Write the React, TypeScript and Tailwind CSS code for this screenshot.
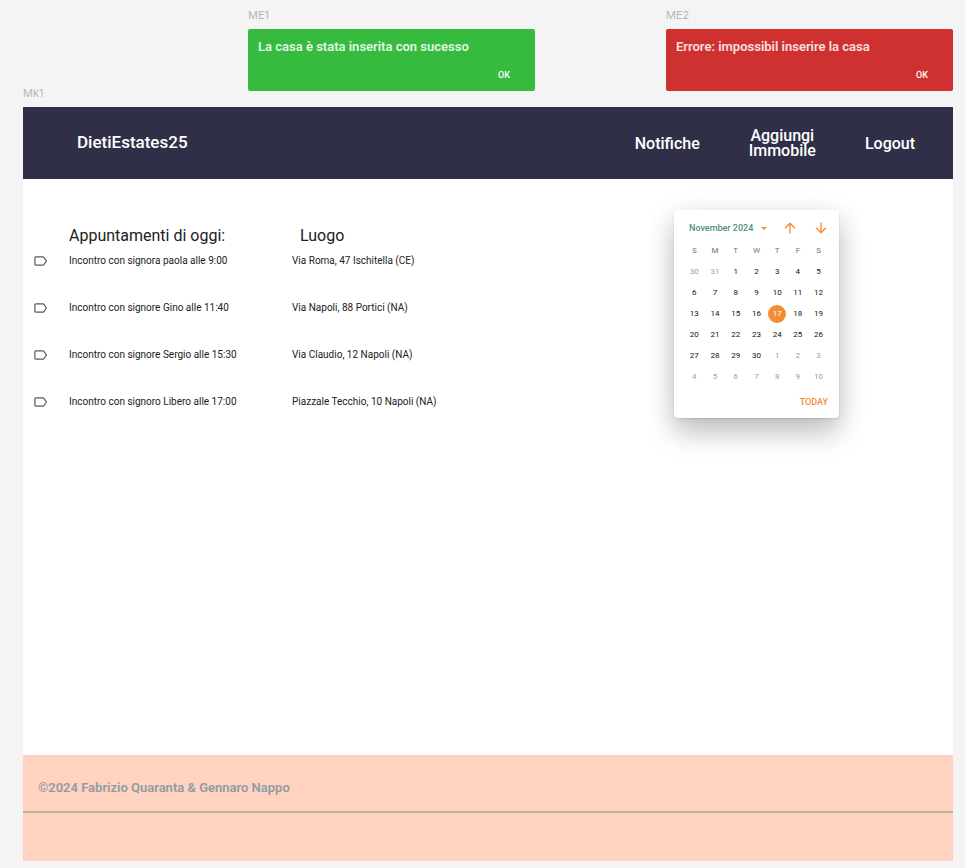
import React from "react";

const appointments = [
  { what: "Incontro con signora paola alle 9:00", where: "Via Roma, 47 Ischitella (CE)" },
  { what: "Incontro con signore Gino alle 11:40", where: "Via Napoli, 88 Portici (NA)" },
  { what: "Incontro con signore Sergio alle 15:30", where: "Via Claudio, 12 Napoli (NA)" },
  { what: "Incontro con signoro Libero alle 17:00", where: "Piazzale Tecchio, 10 Napoli (NA)" },
];

const weekdays = ["S", "M", "T", "W", "T", "F", "S"];

const weeks = [
  [30, 31, 1, 2, 3, 4, 5],
  [6, 7, 8, 9, 10, 11, 12],
  [13, 14, 15, 16, 17, 18, 19],
  [20, 21, 22, 23, 24, 25, 26],
  [27, 28, 29, 30, 1, 2, 3],
  [4, 5, 6, 7, 8, 9, 10],
];

function FrameLabel({ children }: { children: React.ReactNode }) {
  return <div className="font-['Inter',sans-serif] text-[11px] leading-[14px] text-[#b8b8b8]">{children}</div>;
}

function Notice({ label, message, tone }: { label: string; message: string; tone: "success" | "error" }) {
  const background = tone === "success" ? "bg-[#36bb3e]" : "bg-[#cf3130]";
  return (
    <section className="mb-[9px] flex flex-col gap-[7px]">
      <FrameLabel>{label}</FrameLabel>
      <div role="status" className={`flex flex-col rounded-[2px] px-[10px] pt-[10px] pb-2 ${background}`}>
        <p className="text-[13px] leading-4 font-semibold text-white/85">{message}</p>
        <button type="button" className="mt-[13px] mr-[15px] self-end text-[9px] leading-[15px] font-medium text-white">
          OK
        </button>
      </div>
    </section>
  );
}

function TagIcon() {
  return (
    <svg viewBox="0 0 14 10" className="mt-[3px] block h-[10px] w-[14px]" fill="none" stroke="#5a5a5a" strokeWidth="1.2" aria-hidden="true">
      <path d="M2 .8h6.8c.5 0 .8.2 1.1.6L12.4 5 9.9 8.6c-.3.4-.6.6-1.1.6H2c-.7 0-1.1-.4-1.1-1V1.8c0-.6.4-1 1.1-1Z" />
    </svg>
  );
}

function ArrowIcon({ down = false }: { down?: boolean }) {
  return (
    <svg viewBox="0 0 12 12" className={`block size-3 ${down ? "rotate-180" : ""}`} fill="none" stroke="#f28d35" strokeWidth="1.3" aria-hidden="true">
      <path d="M6 11.4V1.2M1 6.2l5-5 5 5" />
    </svg>
  );
}

function Calendar() {
  return (
    <section
      aria-label="Calendario"
      className="w-[165px] rounded-[4px] bg-white px-[10px] pt-[9px] pb-[9px] shadow-[0_1px_2px_rgba(0,0,0,0.12),0_16px_28px_rgba(0,0,0,0.2),0_4px_28px_rgba(0,0,0,0.1)]"
    >
      <div className="flex h-[18px] items-center pl-[5px]">
        <div className="flex items-center gap-[7px]">
          <select
            aria-label="Mese"
            className="h-[14px] appearance-none bg-transparent text-[9px] leading-[14px] font-medium text-[#4f8f85]"
            defaultValue="11"
          >
            <option value="11">November 2024</option>
          </select>
          <svg viewBox="0 0 6 3" className="h-[3px] w-[6px]" fill="#f28d35" aria-hidden="true">
            <path d="M0 0h6L3 3Z" />
          </svg>
        </div>
        <div className="ml-auto flex gap-[19px] pr-[2px]">
          <button type="button" aria-label="Mese precedente"><ArrowIcon /></button>
          <button type="button" aria-label="Mese successivo"><ArrowIcon down /></button>
        </div>
      </div>
      <table className="mt-[3px] w-full table-fixed border-collapse text-center text-[8px] leading-[10px]">
        <thead>
          <tr className="h-[21px]">
            {weekdays.map((day, i) => (
              <th key={i} scope="col" className="p-0 font-normal text-[#757575]">{day}</th>
            ))}
          </tr>
        </thead>
        <tbody>
          {weeks.map((week, w) => (
            <tr key={w} className="h-[21px]">
              {week.map((day, d) => {
                const outside = (w === 0 && day > 20) || (w > 3 && day < 20);
                const selected = day === 17;
                const look = selected
                  ? "bg-[#f28d35] text-white"
                  : outside
                    ? "text-[#9e9e9e]"
                    : "text-[#111111]";
                return (
                  <td key={d} className="p-0">
                    <button type="button" className={`mx-auto flex size-[18px] items-center justify-center rounded-full ${look}`}>
                      {day}
                    </button>
                  </td>
                );
              })}
            </tr>
          ))}
        </tbody>
      </table>
      <div className="mt-[9px] flex justify-end pr-px">
        <button type="button" className="text-[9px] leading-[13px] font-medium text-[#f28d35]">TODAY</button>
      </div>
    </section>
  );
}

export default function App() {
  return (
    <div className="flex min-h-screen flex-col bg-[#f4f4f4] pt-2 pr-3 pb-[7px] pl-[23px] font-['Roboto',sans-serif]">
      <div className="grid grid-cols-[225fr_287fr_131fr_287fr] items-end">
        <FrameLabel>Mk1</FrameLabel>
        <Notice label="ME1" message="La casa è stata inserita con sucesso" tone="success" />
        <span />
        <Notice label="ME2" message="Errore: impossibil inserire la casa" tone="error" />
      </div>

      <div className="mt-[7px] flex flex-1 flex-col bg-white">
        <header className="flex h-[72px] items-center justify-between bg-[#2f3048] pr-[38px] pl-[54px] text-white">
          <h1 className="pb-[2px] text-[17px] leading-5 font-medium">DietiEstates25</h1>
          <nav className="flex items-center gap-[49px] text-center text-base leading-[15px] font-medium">
            <a href="#notifiche">Notifiche</a>
            <a href="#aggiungi">Aggiungi<br />Immobile</a>
            <a href="#logout">Logout</a>
          </nav>
        </header>

        <main className="flex flex-1 items-start justify-between pt-[31px] pr-[114px] pl-[11px]">
          <table className="mt-4 border-collapse text-left text-[#212121]">
            <thead>
              <tr className="h-[27px] align-top text-base leading-5">
                <td className="w-[35px] p-0" />
                <th scope="col" className="w-[223px] p-0 font-normal">Appuntamenti di oggi:</th>
                <th scope="col" className="p-0 pl-2 font-normal">Luogo</th>
              </tr>
            </thead>
            <tbody>
              {appointments.map((item) => (
                <tr key={item.what} className="h-[47px] align-top text-[10px] leading-4">
                  <td className="p-0"><TagIcon /></td>
                  <td className="p-0">{item.what}</td>
                  <td className="p-0">{item.where}</td>
                </tr>
              ))}
            </tbody>
          </table>
          <Calendar />
        </main>

        <footer className="h-[106px] bg-[#ffd3c0]">
          <p className="border-b-2 border-[#b5b5a3] px-[15px] pt-[25px] pb-[15px] text-[13px] leading-4 font-semibold text-[#8f9ca3]">
            ©2024 Fabrizio Quaranta &amp; Gennaro Nappo
          </p>
        </footer>
      </div>
    </div>
  );
}
